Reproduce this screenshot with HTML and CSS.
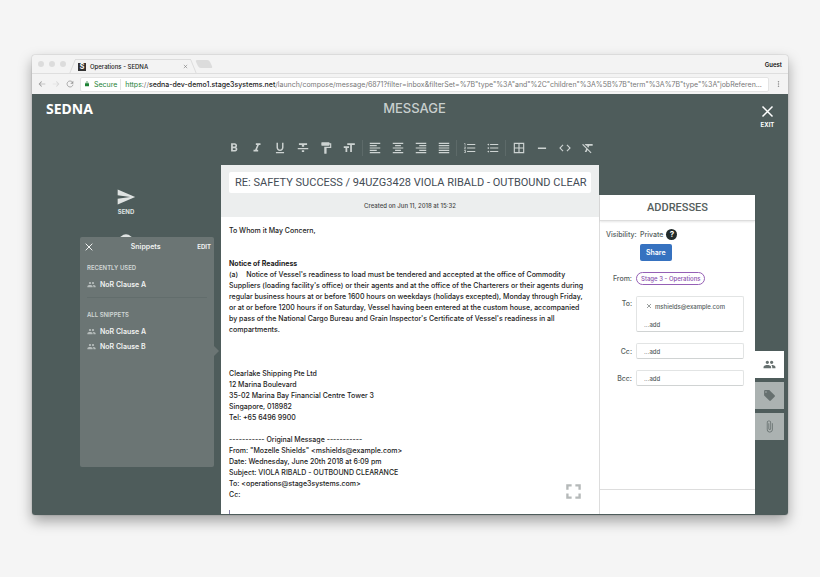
FILE: index.html
```
<!DOCTYPE html>
<html lang="en">
<head>
  <meta charset="UTF-8">
  <title>Operations - SEDNA</title>
  <link rel="stylesheet" href="styles.css">
</head>
<body>

<svg class="sprite" aria-hidden="true">
  <symbol id="close" viewBox="0 0 24 24"><path d="M4 4l16 16M20 4L4 20" fill="none" stroke="currentColor" stroke-width="2.4"/></symbol>
  <symbol id="people" viewBox="0 0 24 24"><path d="M16 11c1.66 0 2.99-1.34 2.99-3S17.66 5 16 5s-3 1.34-3 3 1.34 3 3 3zm-8 0c1.66 0 2.99-1.34 2.99-3S9.66 5 8 5 5 6.34 5 8s1.34 3 3 3zm0 2c-2.33 0-7 1.17-7 3.5V19h14v-2.500c0-2.330-4.670-3.500-7-3.500zm8 0c-.29 0-.62.02-.97.05 1.160.84 1.970 1.970 1.970 3.450V19h6v-2.500c0-2.330-4.670-3.500-7-3.500z"/></symbol>
</svg>

<div class="window">
  <div class="tab-bar">
    <span class="dot"></span><span class="dot"></span><span class="dot"></span>
    <div class="tab">
      <span class="favicon">S</span>
      <span class="tab-title">Operations - SEDNA</span>
      <svg class="tab-close"><use href="#close"/></svg>
    </div>
    <span class="new-tab"></span>
    <span class="guest">Guest</span>
  </div>

  <div class="address-bar">
    <svg class="nav-icon" viewBox="0 0 24 24"><path d="M22 11H6l6-6-2-1-8 8 8 8 2-1-6-6h16z"/></svg>
    <svg class="nav-icon dim" viewBox="0 0 24 24"><path d="M2 11h16l-6-6 2-1 8 8-8 8-2-1 6-6H2z"/></svg>
    <svg class="nav-icon" viewBox="0 0 24 24"><path d="M19 6a9 9 0 1 0 2 8" fill="none" stroke="currentColor" stroke-width="2.4"/><path d="M22 2v9h-9z"/></svg>
    <div class="url">
      <svg class="lock" viewBox="0 0 24 24"><path d="M18 9h-1V7A5 5 0 0 0 7 7v2H6a2 2 0 0 0-2 2v10h16V11a2 2 0 0 0-2-2zm-3 0H9V7a3 3 0 0 1 6 0z"/></svg>
      <span class="secure">Secure</span>
      <span class="url-text"><span class="scheme">https</span>://<b>sedna-dev-demo1.stage3systems.net</b>/launch/compose/message/6871?filter=inbox&amp;filterSet=%7B"type"%3A"and"%2C"children"%3A%5B%7B"term"%3A%7B"type"%3A"jobReferen...</span>
    </div>
    <svg class="menu" viewBox="0 0 24 24"><circle cx="12" cy="4" r="2.500"/><circle cx="12" cy="12" r="2.500"/><circle cx="12" cy="20" r="2.500"/></svg>
  </div>

  <div class="app">
    <header class="app-header">
      <div class="logo">SEDNA</div>
      <h1>MESSAGE</h1>
      <button class="exit"><svg><use href="#close"/></svg>EXIT</button>
    </header>

    <aside class="left">
      <button class="tool"><svg viewBox="0 0 24 24"><path d="M2.010 21L23 12 2.010 3 2 10l15 2-15 2z"/></svg>SEND</button>
      <button class="tool" aria-label="Snippets"><svg viewBox="0 0 24 24"><circle cx="12" cy="12" r="8"/></svg></button>

      <section class="snippets">
        <div class="snippets-head">
          <button aria-label="Close"><svg><use href="#close"/></svg></button>
          <h2>Snippets</h2>
          <button>EDIT</button>
        </div>
        <h3>RECENTLY USED</h3>
        <ul class="recent">
          <li><svg><use href="#people"/></svg>NoR Clause A</li>
        </ul>
        <h3>ALL SNIPPETS</h3>
        <ul>
          <li><svg><use href="#people"/></svg>NoR Clause A</li>
          <li><svg><use href="#people"/></svg>NoR Clause B</li>
        </ul>
      </section>
    </aside>

    <main class="center">
      <div class="toolbar">
        <button aria-label="Bold"><svg viewBox="0 0 24 24"><path d="M15.600 10.790c.97-.67 1.650-1.770 1.650-2.790 0-2.260-1.750-4-4-4H7v14h7.040c2.090 0 3.710-1.700 3.710-3.790 0-1.520-.86-2.820-2.150-3.420zM10 6.500h3c.83 0 1.500.67 1.500 1.500s-.67 1.500-1.500 1.500h-3v-3zm3.500 9H10v-3h3.500c.83 0 1.500.67 1.500 1.500s-.67 1.500-1.500 1.500z"/></svg></button>
        <button aria-label="Italic"><svg viewBox="0 0 24 24"><path d="M10 4v3h2.210l-3.420 8H6v3h8v-3h-2.210l3.420-8H18V4z"/></svg></button>
        <button aria-label="Underline"><svg viewBox="0 0 24 24"><path d="M12 17c3.310 0 6-2.690 6-6V3h-2.500v8c0 1.930-1.570 3.500-3.500 3.500S8.500 12.930 8.500 11V3H6v8c0 3.310 2.690 6 6 6zm-7 2v2h14v-2H5z"/></svg></button>
        <button aria-label="Strikethrough"><svg viewBox="0 0 24 24"><path d="M10 19h4v-3h-4v3zM5 4v3h5v3h4V7h5V4H5zM3 14h18v-2H3v2z"/></svg></button>
        <button aria-label="Format paint"><svg viewBox="0 0 24 24"><path d="M18 4V3c0-.55-.45-1-1-1H5c-.55 0-1 .45-1 1v4c0 .55.45 1 1 1h12c.55 0 1-.45 1-1V6h1v4H9v11c0 .55.45 1 1 1h2c.55 0 1-.45 1-1v-9h8V4h-3z"/></svg></button>
        <button aria-label="Text size"><svg viewBox="0 0 24 24"><path d="M9 4v3h5v12h3V7h5V4H9zm-6 8h3v7h3v-7h3V9H3v3z"/></svg></button>
        <span class="sep"></span>
        <button aria-label="Align left"><svg viewBox="0 0 24 24"><path d="M15 15H3v2h12v-2zm0-8H3v2h12V7zM3 13h18v-2H3v2zm0 8h18v-2H3v2zM3 3v2h18V3H3z"/></svg></button>
        <button aria-label="Align center"><svg viewBox="0 0 24 24"><path d="M7 15v2h10v-2H7zm-4 6h18v-2H3v2zm0-8h18v-2H3v2zm4-6v2h10V7H7zM3 3v2h18V3H3z"/></svg></button>
        <button aria-label="Align right"><svg viewBox="0 0 24 24"><path d="M3 21h18v-2H3v2zm6-4h12v-2H9v2zm-6-4h18v-2H3v2zm6-4h12V7H9v2zM3 3v2h18V3H3z"/></svg></button>
        <button aria-label="Justify"><svg viewBox="0 0 24 24"><path d="M3 21h18v-2H3v2zm0-4h18v-2H3v2zm0-4h18v-2H3v2zm0-4h18V7H3v2zm0-6v2h18V3H3z"/></svg></button>
        <span class="sep"></span>
        <button aria-label="Numbered list"><svg viewBox="0 0 24 24"><path d="M2 17h2v.5H3v1h1v.5H2v1h3v-4H2v1zm1-9h1V4H2v1h1v3zm-1 3h1.800L2 13.100v.9h3v-1H3.200L5 10.900V10H2v1zm5-6v2h14V5H7zm0 14h14v-2H7v2zm0-6h14v-2H7v2z"/></svg></button>
        <button aria-label="Bulleted list"><svg viewBox="0 0 24 24"><path d="M4 10.500c-.83 0-1.500.67-1.500 1.500s.67 1.500 1.500 1.500 1.500-.67 1.500-1.500-.67-1.500-1.500-1.500zm0-6c-.83 0-1.500.67-1.500 1.500S3.170 7.500 4 7.500 5.500 6.830 5.500 6 4.830 4.500 4 4.500zm0 12c-.83 0-1.500.68-1.500 1.500s.68 1.500 1.500 1.500 1.500-.68 1.500-1.500-.67-1.500-1.500-1.500zM7 19h14v-2H7v2zm0-6h14v-2H7v2zm0-8v2h14V5H7z"/></svg></button>
        <span class="sep"></span>
        <button aria-label="Table"><svg viewBox="0 0 24 24"><path d="M3 3v18h18V3H3zm8 16H5v-6h6v6zm0-8H5V5h6v6zm8 8h-6v-6h6v6zm0-8h-6V5h6v6z"/></svg></button>
        <button aria-label="Horizontal line"><svg viewBox="0 0 24 24"><path d="M5 11h14v2.500H5z"/></svg></button>
        <button aria-label="Code"><svg viewBox="0 0 24 24"><path d="M9.400 16.600L4.800 12l4.600-4.600L8 6l-6 6 6 6 1.400-1.400zm5.200 0l4.600-4.600-4.600-4.600L16 6l6 6-6 6-1.400-1.400z"/></svg></button>
        <button aria-label="Clear format"><svg viewBox="0 0 24 24"><path d="M3.270 5L2 6.270l6.970 6.970L6.500 19h3l1.570-3.660L16.730 21 18 19.730 3.550 5.270 3.270 5zM6 5v.18L8.820 8h2.400l-.72 1.680 2.100 2.100L14.210 8H20V5H6z"/></svg></button>
      </div>

      <article class="message">
        <div class="message-head">
          <input type="text" class="subject" aria-label="Subject" value="RE: SAFETY SUCCESS / 94UZG3428 VIOLA RIBALD - OUTBOUND CLEAR">
          <p>Created on Jun 11, 2018 at 15:32</p>
        </div>
        <div class="message-body">
          <p>To Whom it May Concern,</p>
          <br><br>
          <p><b>Notice of Readiness</b></p>
          <p><span class="clause">(a)</span>Notice of Vessel's readiness to load must be tendered and accepted at the office of Commodity<br>
          Suppliers (loading facility's office) or their agents and at the office of the Charterers or their agents during<br>
          regular business hours at or before 1600 hours on weekdays (holidays excepted), Monday through Friday,<br>
          or at or before 1200 hours if on Saturday, Vessel having been entered at the custom house, accompanied<br>
          by pass of the National Cargo Bureau and Grain Inspector's Certificate of Vessel's readiness in all<br>
          compartments.</p>
          <br><br><br>
          <p>Clearlake Shipping Pte Ltd<br>
          12 Marina Boulevard<br>
          35-02 Marina Bay Financial Centre Tower 3<br>
          Singapore, 018982<br>
          Tel: +65 6496 9900</p>
          <br>
          <p>----------- Original Message -----------<br>
          From: "Mozelle Shields" &lt;mshields@example.com&gt;<br>
          Date: Wednesday, June 20th 2018 at 6:09 pm<br>
          Subject: VIOLA RIBALD - OUTBOUND CLEARANCE<br>
          To: &lt;operations@stage3systems.com&gt;<br>
          Cc:</p>
          <span class="caret"></span>
        </div>
        <button class="expand" aria-label="Full screen"><svg viewBox="0 0 16 16"><path d="M1.500 6V1.500H6M10 1.500h4.500V6M14.500 10v4.500H10M6 14.500H1.500V10" fill="none" stroke="currentColor" stroke-width="2.500"/></svg></button>
      </article>
    </main>

    <aside class="right">
      <section class="addresses">
        <h2>ADDRESSES</h2>
        <div class="fields">
          <div class="visibility">
            <span>Visibility:</span>
            <span>Private</span>
            <span class="help">?</span>
            <button class="share">Share</button>
          </div>
          <div class="field from">
            <span>From:</span>
            <span class="sender">Stage 3 - Operations</span>
          </div>
          <div class="field to">
            <label for="to">To:</label>
            <div class="box">
              <div class="recipient"><svg><use href="#close"/></svg>mshields@example.com</div>
              <input type="text" id="to" placeholder="...add">
            </div>
          </div>
          <div class="field">
            <label for="cc">Cc:</label>
            <div class="box"><input type="text" id="cc" placeholder="...add"></div>
          </div>
          <div class="field">
            <label for="bcc">Bcc:</label>
            <div class="box"><input type="text" id="bcc" placeholder="...add"></div>
          </div>
        </div>
        <div class="addresses-foot"></div>
      </section>
      <nav class="side-tabs">
        <button class="active" aria-label="Addresses"><svg><use href="#people"/></svg></button>
        <button aria-label="Tags"><svg viewBox="0 0 24 24"><path d="M21.410 11.580l-9-9C12.050 2.220 11.550 2 11 2H4c-1.100 0-2 .9-2 2v7c0 .55.22 1.050.59 1.420l9 9c.36.36.86.58 1.410.58.55 0 1.050-.22 1.410-.59l7-7c.37-.36.59-.86.59-1.410 0-.55-.23-1.060-.59-1.420zM5.500 7C4.670 7 4 6.330 4 5.500S4.670 4 5.500 4 7 4.670 7 5.500 6.330 7 5.500 7z"/></svg></button>
        <button aria-label="Attachments"><svg viewBox="0 0 24 24"><path d="M16.500 6v11.500c0 2.210-1.790 4-4 4s-4-1.790-4-4V5c0-1.380 1.120-2.500 2.500-2.500s2.500 1.120 2.500 2.500v10.500c0 .55-.45 1-1 1s-1-.45-1-1V6H10v9.500c0 1.380 1.120 2.500 2.500 2.500s2.500-1.120 2.500-2.500V5c0-2.210-1.790-4-4-4S7 2.790 7 5v12.500c0 3.040 2.460 5.500 5.500 5.500s5.500-2.460 5.500-5.500V6h-1.500z"/></svg></button>
      </nav>
    </aside>
  </div>
</div>

</body>
</html>
```

FILE: styles.css
```
* {
  margin: 0;
  padding: 0;
  box-sizing: border-box;
}
body {
  font-family: Inter, "Liberation Sans", sans-serif;
  font-size: 7px;
  line-height: 11px;
  background: #f5f5f5;
  color: #222;
  min-height: 100vh;
  padding: 55px 32px 62px;
  display: flex;
}
button, input {
  font: inherit;
  color: inherit;
  background: none;
  border: none;
}
svg {
  display: block;
  fill: currentColor;
  flex: none;
}
ul {
  list-style: none;
}
.sprite {
  position: absolute;
  width: 0;
  height: 0;
}
.window {
  flex: 1;
  min-width: 0;
  display: flex;
  flex-direction: column;
  border-radius: 3px;
  overflow: hidden;
  box-shadow: 0 0 1px rgba(0, 0, 0, 0.5), 0 6px 14px rgba(0, 0, 0, 0.35);
}

/* browser chrome */
.tab-bar {
  display: flex;
  align-items: center;
  height: 19px;
  padding: 0 6px;
  background: #f3f3f3;
  border-bottom: 1px solid #dedede;
}
.dot {
  width: 6px;
  height: 6px;
  margin-right: 5px;
  border-radius: 50%;
  background: #dcdcdc;
}
.tab {
  position: relative;
  display: flex;
  align-items: center;
  align-self: flex-end;
  gap: 4px;
  width: 116px;
  height: 14px;
  margin-left: 4px;
  padding: 0 3px;
  border-top: 1px solid #dcdcdc;
}
.tab::before, .tab::after {
  content: "";
  position: absolute;
  top: 0;
  bottom: 0;
  width: 1px;
  background: #dcdcdc;
}
.tab::before {
  left: -3px;
  transform: skewX(-22deg);
}
.tab::after {
  right: -3px;
  transform: skewX(22deg);
}
.favicon {
  width: 8px;
  height: 8px;
  background: #333;
  color: #fff;
  font-weight: 700;
  line-height: 8px;
  text-align: center;
}
.tab-title {
  flex: 1;
  font-size: 6px;
  font-weight: 500;
}
.tab-close {
  width: 5px;
  height: 5px;
  color: #666;
}
.new-tab {
  width: 14px;
  height: 8px;
  margin-left: 6px;
  border-radius: 2px;
  background: #dcdcdc;
  transform: skewX(25deg);
}
.guest {
  margin-left: auto;
  color: #111;
  font-size: 6px;
  font-weight: 600;
}
.address-bar {
  display: flex;
  align-items: center;
  gap: 6px;
  height: 20px;
  padding: 0 6px;
  background: #f3f3f3;
}
.nav-icon {
  width: 8px;
  height: 8px;
  color: #999;
}
.dim {
  color: #d5d5d5;
}
.url {
  flex: 1;
  min-width: 0;
  display: flex;
  align-items: center;
  gap: 4px;
  height: 15px;
  padding: 0 3px;
  border: 1px solid #e4e4e4;
  border-radius: 2px;
  background: #fff;
}
.lock {
  width: 6px;
  height: 6px;
  color: #1e8235;
}
.secure, .scheme {
  color: #1e8235;
}
.secure {
  padding-right: 3px;
  border-right: 1px solid #e4e4e4;
}
.url-text {
  overflow: hidden;
  white-space: nowrap;
  text-overflow: ellipsis;
  color: #777;
}
.url-text b {
  color: #222;
  font-weight: 500;
}
.menu {
  width: 7px;
  height: 8px;
  color: #888;
}

/* app */
.app {
  flex: 1;
  display: grid;
  grid-template-columns: 1fr 2fr 1fr;
  grid-template-rows: 36px 1fr;
  padding-bottom: 1px;
  background: #4e5c5b;
}
.app-header {
  grid-column: 1 / -1;
  display: grid;
  grid-template-columns: 1fr auto 1fr;
  align-items: start;
  padding: 6px 13px 0 14px;
  color: #fff;
}
.logo {
  font-family: "Noto Sans", sans-serif;
  font-size: 14px;
  font-weight: 700;
  line-height: 17px;
}
.app-header h1 {
  padding-left: 8px;
  font-size: 13px;
  font-weight: 500;
  line-height: 17px;
  color: #c8cfce;
}
.exit {
  justify-self: end;
  display: flex;
  flex-direction: column;
  align-items: center;
  padding-top: 4px;
  font-size: 6px;
  font-weight: 700;
}
.exit svg {
  width: 15px;
  height: 15px;
}

/* left column */
.left {
  position: relative;
  padding: 57px 7px 0 48px;
}
.tool {
  display: flex;
  flex-direction: column;
  align-items: center;
  width: 20px;
  margin: 0 0 14px 36px;
  color: #dfe3e2;
  font-size: 6px;
  font-weight: 700;
  line-height: 10px;
}
.tool svg {
  width: 20px;
  height: 20px;
}
.snippets {
  position: absolute;
  top: 107px;
  right: 7px;
  bottom: 47px;
  left: 48px;
  padding: 4px 3px 4px 7px;
  border-radius: 2px;
  background: #6b7574;
  color: #f0f2f1;
}
.snippets::after {
  content: "";
  position: absolute;
  top: 109px;
  right: -5px;
  border: 5px solid transparent;
  border-left-color: #6b7574;
  border-right: none;
}
.snippets-head {
  display: flex;
  align-items: center;
  justify-content: space-between;
  margin: 0 0 10px -3px;
  font-size: 6px;
  font-weight: 700;
}
.snippets-head svg {
  width: 10px;
  height: 10px;
}
.snippets h2 {
  font-size: 7px;
  font-weight: 600;
}
.snippets h3 {
  font-size: 6px;
  font-weight: 600;
  color: #d0d5d4;
}
.snippets li {
  display: flex;
  align-items: center;
  gap: 4px;
  height: 15px;
  font-weight: 600;
}
.snippets ul {
  margin: 4px 4px 0 0;
}
.snippets .recent {
  padding-bottom: 5px;
  margin-bottom: 11px;
  border-bottom: 1px solid #626d6c;
}
.snippets li svg {
  width: 9px;
  height: 9px;
  color: #b5bcbb;
}

/* center column */
.center {
  display: flex;
  flex-direction: column;
  min-width: 0;
}
.toolbar {
  display: flex;
  align-items: center;
  height: 35px;
  padding-left: 2px;
  color: #cdd3d2;
}
.toolbar button {
  width: 23px;
  padding: 4px;
}
.toolbar svg {
  width: 14px;
  height: 14px;
  margin: auto;
}
.sep {
  width: 1px;
  height: 16px;
  margin: 0 1px;
  background: #5d6a69;
}
.message {
  position: relative;
  flex: 1;
  display: flex;
  flex-direction: column;
  background: #fff;
}
.message-head {
  padding: 7px 8px 6px;
  background: #eceeee;
  font-size: 6px;
  font-weight: 500;
  text-align: center;
  color: #444;
}
.subject {
  display: block;
  width: 100%;
  height: 21px;
  margin-bottom: 7px;
  padding: 0 0 0 6px;
  border-radius: 2px;
  background: #fff;
  color: #444c55;
  font-family: Roboto, sans-serif;
  font-size: 11px;
  font-weight: 400;
}
.message-body {
  padding: 8px 8px 0;
  font-weight: 500;
  white-space: nowrap;
}
.clause {
  padding-right: 8px;
}
.caret {
  display: block;
  width: 1px;
  height: 4px;
  margin-top: 10px;
  background: #8a84a8;
}
.expand {
  position: absolute;
  right: 18px;
  bottom: 15px;
  color: #b5b9b9;
}
.expand svg {
  width: 15px;
  height: 15px;
}

/* right column */
.right {
  display: flex;
  align-items: stretch;
  padding: 65px 4px 0 0;
  color: #555e5d;
  font-weight: 500;
}
.addresses {
  flex: 1;
  min-width: 0;
  display: flex;
  flex-direction: column;
  background: #fff;
  border-left: 1px solid #ddd;
}
.addresses h2 {
  height: 26px;
  font-family: Roboto, sans-serif;
  font-size: 11px;
  font-weight: 500;
  line-height: 26px;
  text-align: center;
  border-bottom: 1px solid #ddd;
  box-shadow: 0 1px 2px rgba(0, 0, 0, 0.1);
}
.fields {
  flex: 1;
  display: flex;
  flex-direction: column;
  gap: 11px;
  padding: 8px 11px 0 6px;
}
.visibility {
  display: grid;
  grid-template-columns: 31px auto 1fr;
  align-items: center;
  column-gap: 3px;
  row-gap: 4px;
}
.help {
  width: 11px;
  height: 11px;
  border-radius: 50%;
  background: #222b2b;
  color: #fff;
  font-size: 8px;
  font-weight: 700;
  text-align: center;
}
.share {
  grid-column: 2 / -1;
  justify-self: start;
  height: 17px;
  padding: 0 6px;
  border-radius: 2px;
  background: #3672c0;
  color: #fff;
  font-weight: 600;
}
.field {
  display: grid;
  grid-template-columns: 26px 1fr;
  align-items: center;
  gap: 4px;
}
.field > :first-child {
  text-align: right;
}
.sender {
  justify-self: start;
  padding: 0 4px;
  border: 1px solid #9560b5;
  border-radius: 7px;
  color: #8a4fae;
  font-size: 6px;
}
.to {
  align-items: start;
}
.to label {
  padding-top: 2px;
}
.box {
  min-width: 0;
  padding: 1px 7px;
  border: 1px solid #e2e4e4;
  border-bottom-color: #d0d3d3;
  border-radius: 2px;
}
.box input {
  display: block;
  width: 100%;
  height: 12px;
  font-size: 6px;
}
.box input::placeholder {
  color: #555e5d;
}
.recipient {
  display: flex;
  align-items: center;
  gap: 3px;
  height: 16px;
  padding-left: 2px;
  margin-bottom: 4px;
  font-size: 6px;
}
.recipient svg {
  width: 6px;
  height: 6px;
}
.addresses-foot {
  height: 25px;
  border-top: 1px solid #ddd;
}
.side-tabs {
  display: flex;
  flex-direction: column;
  gap: 4px;
  width: 29px;
  padding-top: 156px;
}
.side-tabs button {
  height: 27px;
  background: #abb2b1;
  color: #66706f;
}
.side-tabs .active {
  background: #fff;
}
.side-tabs svg {
  width: 13px;
  height: 13px;
  margin: auto;
}
```
